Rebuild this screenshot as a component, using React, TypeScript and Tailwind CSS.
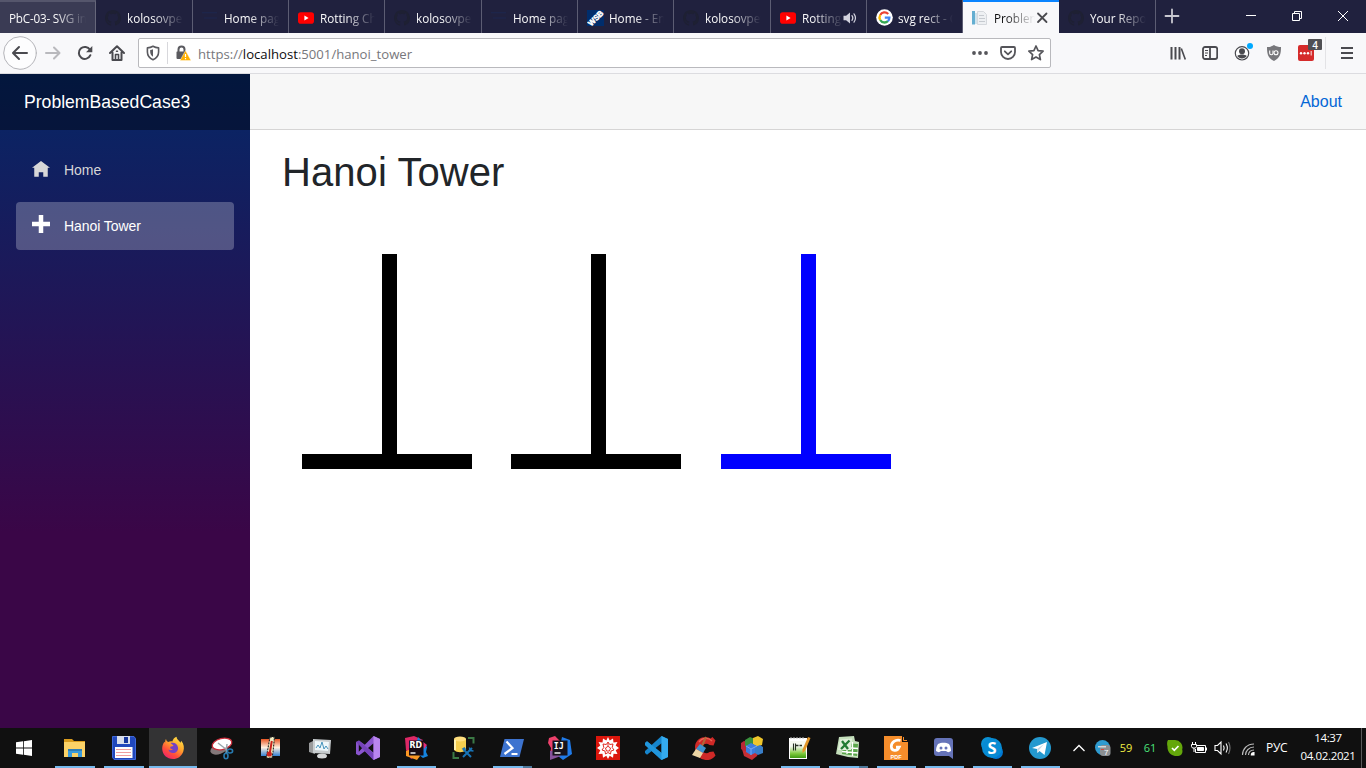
import type { ReactNode } from "react";

const UI = "font-['Open_Sans','Noto_Sans',sans-serif]";

function YouTube() {
  return (
    <svg width="16" height="16" viewBox="0 0 16 16">
      <rect x="0" y="2.3" width="16" height="11.4" rx="2.8" fill="#f00" />
      <path d="M6.4 5.6v4.8l4.2-2.4z" fill="#fff" />
    </svg>
  );
}

function GitHub() {
  return (
    <svg width="16" height="16" viewBox="0 0 16 16" fill="#1e2033">
      <path d="M8 0C3.58 0 0 3.58 0 8c0 3.54 2.29 6.53 5.47 7.59.4.07.55-.17.55-.38v-1.49c-2.23.48-2.69-.94-2.69-.94-.36-.93-.89-1.17-.89-1.17-.73-.5.05-.49.05-.49.81.06 1.23.83 1.23.83.72 1.23 1.88.87 2.34.66.07-.52.28-.87.51-1.07-1.78-.2-3.64-.89-3.64-3.95 0-.87.31-1.59.82-2.15-.08-.2-.36-1.02.08-2.12 0 0 .67-.21 2.2.82a7.6 7.6 0 0 1 4 0c1.53-1.04 2.2-.82 2.2-.82.44 1.1.16 1.92.08 2.12.51.56.82 1.27.82 2.15 0 3.07-1.87 3.75-3.65 3.95.29.25.54.73.54 1.48v2.2c0 .21.15.46.55.38A8 8 0 0 0 16 8c0-4.42-3.58-8-8-8z" />
    </svg>
  );
}

function DarkBars() {
  return (
    <svg width="18" height="16" viewBox="0 0 18 16">
      <path d="M0 2.5h16M2 8h14" stroke="#1d2751" strokeWidth="1" />
    </svg>
  );
}

function Wsb() {
  return (
    <svg width="17" height="16" viewBox="0 0 17 16">
      <rect y="0" width="17" height="16" fill="#002d6c" />
      <text x="8.500" y="11" textAnchor="middle" transform="rotate(-45 8.500 8)" fill="#fff" stroke="#fff" strokeWidth=".5" fontFamily="Liberation Sans" fontSize="8" fontWeight="700" textLength="18" lengthAdjust="spacingAndGlyphs">WSB</text>
    </svg>
  );
}

function Google() {
  return (
    <svg width="17" height="17" viewBox="0 0 17 17">
      <circle cx="8.5" cy="8.5" r="8.3" fill="#fff" />
      <g fill="none" strokeWidth="2.3">
        <path d="M12.2 5A5 5 0 0 0 4.2 6" stroke="#ea4335" />
        <path d="M4.2 6a5 5 0 0 0 0 5" stroke="#fbbc05" />
        <path d="M4.2 11a5 5 0 0 0 7.7 1.2" stroke="#34a853" />
        <path d="M11.9 12.2A5 5 0 0 0 13.4 8.6H8.8" stroke="#4285f4" />
      </g>
    </svg>
  );
}

function PageIcon() {
  return (
    <svg width="16" height="16" viewBox="0 0 16 16">
      <path d="M5.500 1.500h6l3 3v10h-9z" fill="#eef0f3" stroke="#d5d8dd" />
      <path d="M7 5.500h5M7 8.500h6M7 11.500h6" stroke="#c6cad0" />
      <rect x="0" y="1" width="3" height="13.500" fill="#64aed1" />
      <rect x="3" y="3" width="2" height="11" fill="#cfe3ed" />
    </svg>
  );
}

function Speaker() {
  return (
    <svg className="-mr-px" width="15" height="14" viewBox="0 0 15 14" fill="none" stroke="#d2d2de" strokeWidth="1.200" strokeLinecap="round">
      <path d="M.5 4.800h2.600L7 1.500v11L3.100 9.200H.5z" fill="#d2d2de" stroke="none" />
      <path d="M9 4.600c1 1.400 1 3.400 0 4.800M11 2.800c1.700 2.400 1.700 6 0 8.400" />
    </svg>
  );
}

type Tab = { title: string; icon?: ReactNode; w: string; kind?: "first" | "active"; sound?: boolean };

const tabs: Tab[] = [
  { title: "PbC-03- SVG in", w: "w-[96px]", kind: "first" },
  { title: "kolosovpetr", icon: <GitHub />, w: "w-[97px]" },
  { title: "Home page", icon: <DarkBars />, w: "w-[96px]" },
  { title: "Rotting Chr", icon: <YouTube />, w: "w-[96px]" },
  { title: "kolosovpetr", icon: <GitHub />, w: "w-[97px]" },
  { title: "Home page", icon: <DarkBars />, w: "w-[96px]" },
  { title: "Home - Eng", icon: <Wsb />, w: "w-[96px]" },
  { title: "kolosovpetr", icon: <GitHub />, w: "w-[97px]" },
  { title: "Rotting C", icon: <YouTube />, w: "w-[96px]", sound: true },
  { title: "svg rect - G", icon: <Google />, w: "w-[96px]" },
  { title: "Problem", icon: <PageIcon />, w: "w-[96px]", kind: "active" },
  { title: "Your Repos", icon: <GitHub />, w: "w-[97px]" },
];

function TabItem({ tab }: { tab: Tab }) {
  const look =
    tab.kind === "active"
      ? "bg-[#f8f8fa] border-t-2 border-t-[#0a84ff] text-[#0c0c0d] pb-0"
      : tab.kind === "first"
        ? "bg-[#3a3b54] border-t-2 border-t-[#55566c] border-r border-r-[#66677a] text-[#f9f9fa] tracking-[-0.2px]"
        : "border-r border-r-[#5c5d73] text-[#f9f9fa] pt-0.5";
  return (
    <div className={`flex h-[33px] shrink-0 items-center pl-[9px] pr-[9px] ${tab.w} ${look}`}>
      {tab.icon && <span className="mr-[5px] flex w-[17px] shrink-0 items-center">{tab.icon}</span>}
      <span className="min-w-0 flex-1 overflow-hidden whitespace-nowrap text-[11.7px] leading-4 [mask-image:linear-gradient(to_left,transparent,black_30px)]">
        {tab.title}
      </span>
      {tab.sound && <Speaker />}
      {tab.kind === "active" && (
        <svg className="-ml-px shrink-0" width="16" height="16" viewBox="0 0 16 16" stroke="#4a4a4f" strokeWidth="1.800" strokeLinecap="round">
          <path d="M4 3.500l8.500 8.500M12.500 3.500L4 12" />
        </svg>
      )}
    </div>
  );
}

function TabStrip() {
  return (
    <div className="flex h-[33px] shrink-0 bg-[#20213e]">
      {tabs.map((t, i) => (
        <TabItem key={i} tab={t} />
      ))}
      <svg className="ml-2 mt-2" width="16" height="16" viewBox="0 0 16 16" stroke="#c8c8d0" strokeWidth="1.800" strokeLinecap="round">
        <path d="M8 1.500v13M1.500 8h13" />
      </svg>
      <div className="ml-auto flex h-8 text-white">
        <svg width="46" height="32" viewBox="0 0 46 32" stroke="#fff" fill="none">
          <path d="M18 15.500h10" />
        </svg>
        <svg width="46" height="32" viewBox="0 0 46 32" stroke="#fff" fill="none">
          <path d="M18.500 13.500h7v7h-7zM20.500 13.500v-2h7v7h-2" />
        </svg>
        <svg width="46" height="32" viewBox="0 0 46 32" stroke="#fff" fill="none">
          <path d="M18 11l10 10M28 11l-10 10" />
        </svg>
      </div>
    </div>
  );
}

function Toolbar() {
  return (
    <div className="flex h-[41px] shrink-0 items-center border-b border-[#dcdce0] bg-[#f8f8fa]">
      <svg className="ml-[3px]" width="34" height="34" viewBox="0 0 34 34" fill="none" stroke="#4a4a4f" strokeWidth="2" strokeLinecap="round" strokeLinejoin="round">
        <circle cx="17" cy="17" r="16.300" stroke="#b4b4b9" strokeWidth="1" fill="#fdfdfe" />
        <path d="M24 17H10.500M16 11l-6 6 6 6" />
      </svg>
      <svg className="ml-2" width="16" height="16" viewBox="0 0 16 16" fill="none" stroke="#b9b9bd" strokeWidth="2" strokeLinecap="round" strokeLinejoin="round">
        <path d="M1 8h13M9 2.500L14.500 8 9 13.500" />
      </svg>
      <svg className="ml-4" width="16" height="16" viewBox="0 0 16 16" fill="none" stroke="#4a4a4f" strokeWidth="2">
        <path d="M13.400 10.200A6 6 0 1 1 13 4.800" strokeLinecap="round" />
        <path d="M15.300 1v6.300H9z" fill="#4a4a4f" stroke="none" />
      </svg>
      <svg className="ml-4" width="16" height="16" viewBox="0 0 16 16" fill="none" stroke="#4a4a4f" strokeWidth="2" strokeLinecap="round" strokeLinejoin="round">
        <path d="M1 8l7-6.800L15 8M3.500 7.500V15h9V7.500" />
        <path d="M6.500 15V9.500h3V15" strokeWidth="1.600" />
        <path d="M7.500 6.300h1" strokeWidth="1.500" />
      </svg>
      <div className="ml-[13px] flex h-[30px] w-[913px] items-center rounded-[2px] border border-[#b9b9bd] bg-white">
        <svg className="ml-[7px]" width="14" height="16" viewBox="0 0 14 16" fill="none" stroke="#5a5a5f" strokeWidth="1.600" strokeLinejoin="round">
          <path d="M7 1.200C5 2.400 3 2.800 1.400 2.900V7c0 3.700 2.400 6.300 5.600 7.700C10.200 13.300 12.600 10.700 12.600 7V2.900C11 2.800 9 2.400 7 1.200z" />
          <path d="M7 4.200v7.600C5 10.500 4.200 8.800 4.200 7V5c1-.1 2-.4 2.800-.8z" fill="#5a5a5f" stroke="none" />
        </svg>
        <span className="ml-[7px] h-[22px] w-px bg-[#d8d8dc]" />
        <svg className="ml-[7px]" width="16" height="16" viewBox="0 0 16 16">
          <path d="M3.500 7V4.500a3 3 0 0 1 6 0V7" fill="none" stroke="#5a5a5f" strokeWidth="2" />
          <path d="M2 6.500h8.500L6.500 14H2.500a1 1 0 0 1-1-1V7z" fill="#5a5a5f" />
          <path d="M10.500 5.500L16 15.500H5z" fill="#ffb000" stroke="#fff" strokeWidth=".4" />
          <path d="M10.500 9v3M10.500 13v1.200" stroke="#fff" strokeWidth="1.200" />
        </svg>
        <span className="ml-[7px] whitespace-nowrap pt-0.5 text-[13.150px] leading-5 text-[#77777c]">
          https://<span className="text-[#0c0c0d]">localhost</span>:5001/hanoi_tower
        </span>
        <div className="ml-auto flex items-center pr-1.5">
          <svg width="16" height="16" viewBox="0 0 16 16" fill="#55555a">
            <circle cx="2" cy="8" r="1.900" />
            <circle cx="8" cy="8" r="1.900" />
            <circle cx="14" cy="8" r="1.900" />
          </svg>
          <svg className="ml-3" width="16" height="16" viewBox="0 0 16 16" fill="none" stroke="#55555a" strokeWidth="1.800" strokeLinecap="round" strokeLinejoin="round">
            <path d="M2 2h12a1 1 0 0 1 1 1v4a7 7 0 0 1-14 0V3a1 1 0 0 1 1-1z" />
            <path d="M4.800 6.300L8 9.300l3.200-3" />
          </svg>
          <svg className="ml-3" width="16" height="16" viewBox="0 0 16 16" fill="none" stroke="#55555a" strokeWidth="1.700" strokeLinejoin="round">
            <path d="M8 1l2.100 4.600 5 .6-3.700 3.400 1 5L8 12.100l-4.400 2.500 1-5L.9 6.200l5-.6z" />
          </svg>
        </div>
      </div>
      <div className="ml-auto flex items-center">
        <svg width="16" height="16" viewBox="0 0 16 16" stroke="#4a4a4f" strokeWidth="2">
          <path d="M1.500 2v12.500M5.500 2v12.500M9.500 2v12.500" />
          <path d="M11.300 3.500l4 11" strokeWidth="1.600" />
        </svg>
        <svg className="ml-4" width="16" height="16" viewBox="0 0 16 16" fill="none" stroke="#4a4a4f" strokeWidth="1.800">
          <rect x="1" y="2" width="14.200" height="12" rx="2" />
          <path d="M8 2v12" />
          <path d="M3 5.500h3M3 8h3M3 10.500h2" strokeWidth="1" />
        </svg>
        <div className="relative ml-4 size-4">
          <svg width="16" height="16" viewBox="0 0 16 16">
            <circle cx="8" cy="8.300" r="6.700" fill="#fff" stroke="#4a4a4f" strokeWidth="1.200" />
            <circle cx="8" cy="6.300" r="3" fill="#4a4a4f" />
            <path d="M3.200 11c2-2 7.600-2 9.600 0-2 3.200-7.600 3.200-9.600 0z" fill="#4a4a4f" />
          </svg>
          <span className="absolute -right-[3px] -top-[2px] size-1.5 rounded-full bg-[#00a9ff]" />
        </div>
        <svg className="ml-4" width="16" height="16" viewBox="0 0 16 16">
          <path d="M8 0c2 1.500 4.500 2 7 2 0 7-1 11-7 14C2 13 1 9 1 2c2.500 0 5-.5 7-2z" fill="#77777b" />
          <path d="M3.700 5.500v2.700c0 2 3.300 2 3.300 0V5.500" fill="none" stroke="#fff" strokeWidth="1.100" />
          <circle cx="10" cy="7.700" r="2" fill="none" stroke="#fff" strokeWidth="1.100" />
        </svg>
        <div className="relative ml-4 size-4">
          <div className="flex size-4 items-center justify-center rounded-[2px] bg-[#d52b2b]">
            <svg width="16" height="16" viewBox="0 0 16 16" fill="#fff">
              <circle cx="3" cy="8.300" r="1.200" />
              <circle cx="6.500" cy="8.300" r="1.200" />
              <circle cx="10" cy="8.300" r="1.200" />
              <path d="M12.700 6h.9v4.600h-.9z" />
            </svg>
          </div>
          <span className="absolute -right-2 -top-1.5 flex h-[11px] w-[14px] items-center justify-center rounded-[1px] bg-[#505054] text-[10px] font-semibold leading-none text-white">4</span>
        </div>
        <span className="ml-[11px] h-8 w-px bg-[#e3e3e6]" />
        <svg className="ml-[14px] mr-3" width="14" height="14" viewBox="0 0 14 14" stroke="#4a4a4f" strokeWidth="1.800">
          <path d="M1 2h12M1 7h12M1 12h12" />
        </svg>
      </div>
    </div>
  );
}

function Sidebar() {
  return (
    <aside className="w-[250px] shrink-0 bg-[linear-gradient(180deg,rgb(5,39,103)_0%,#3a0647_70%)]">
      <div className="flex h-14 items-center bg-black/40 pl-6 text-[17.6px] text-white">ProblemBasedCase3</div>
      <nav className="flex flex-col gap-2 px-4 pt-4 text-[14px] tracking-[-0.06px]">
        <a className="flex h-12 items-center rounded pl-4 text-[#d7d7d7]">
          <svg className="mr-[14px]" width="18" height="18" viewBox="0 0 8 8" fill="currentColor">
            <path d="M4 0l-4 3h1v4h2v-2h2v2h2v-4.030l1 .03-4-3z" />
          </svg>
          Home
        </a>
        <a className="flex h-12 items-center rounded bg-white/25 pl-4 text-white">
          <svg className="-mt-1 mr-[14px]" width="18" height="18" viewBox="0 0 8 8" fill="currentColor">
            <path d="M3 0v3h-3v2h3v3h2v-3h3v-2h-3v-3h-2z" />
          </svg>
          Hanoi Tower
        </a>
      </nav>
    </aside>
  );
}

function Tower({ color }: { color: string }) {
  return (
    <svg width="170" height="215" viewBox="0 0 170 215" fill={color}>
      <rect x="80" width="15" height="201" />
      <rect y="200" width="170" height="15" />
    </svg>
  );
}

function Page() {
  return (
    <div className="flex min-h-0 flex-1 bg-white font-['Liberation_Sans',Arial,sans-serif]">
      <Sidebar />
      <main className="flex-1">
        <header className="flex h-14 items-center justify-end border-b border-[#d6d5d5] bg-[#f7f7f7] pr-6 text-base text-[#0366d6]">About</header>
        <div className="pl-8 pt-[18px]">
          <h1 className="text-[40px] leading-12 tracking-[0.08px] text-[#212529]">Hanoi Tower</h1>
          <div className="ml-5 mt-[58px] flex">
            <Tower color="#000" />
            <span className="w-[39px]" />
            <Tower color="#000" />
            <span className="w-10" />
            <Tower color="#00f" />
          </div>
        </div>
      </main>
    </div>
  );
}

function Art({ children }: { children: ReactNode }) {
  return (
    <svg width="24" height="24" viewBox="0 0 24 24">
      {children}
    </svg>
  );
}

const SANS = "Liberation Sans";

const apps: { art: ReactNode; state?: "open" | "active" | "multi" }[] = [
  {
    state: "open",
    art: (
      <Art>
        <path d="M1 3h8l2 2h11v4H1z" fill="#d99c1e" />
        <path d="M1 6h21v15H1z" fill="#fbd267" />
        <path d="M5 21v-8h14v8h-4v-4H9v4z" fill="#3a9bdc" />
        <path d="M5 13h14v2H5z" fill="#2f7eb5" />
      </Art>
    ),
  },
  {
    state: "open",
    art: (
      <Art>
        <path d="M.5.500h21.500l1.500 2v21H2l-1.500-2z" fill="#2148bd" stroke="#3f68d8" />
        <path d="M5 0h13v8H5z" fill="#d9dfed" />
        <path d="M12 1h4v6h-4z" fill="#16379e" />
        <path d="M3 11h17.500v11H3z" fill="#fff" />
        <path d="M4 13.500h15M4 16.500h15M4 19.500h15" stroke="#ef9e9e" />
      </Art>
    ),
  },
  {
    state: "active",
    art: (
      <Art>
        <defs>
          <linearGradient id="fx" x1=".85" y1="0" x2=".2" y2="1">
            <stop offset="0" stopColor="#ffe94a" />
            <stop offset=".4" stopColor="#ffa52c" />
            <stop offset=".7" stopColor="#ff4f3b" />
            <stop offset="1" stopColor="#ee1f70" />
          </linearGradient>
        </defs>
        <path d="M5 3c.3 1.700 1 2.500 2.300 3 1.200-.6 2.600-.8 4-.5C12 3.500 13.300 1.500 15.500.8c.2 2.500 2.200 3.500 4 6l.7-2C23 8 23.500 12 22.300 15.500 20.500 20.500 16.500 23 12 23 6 23 1.500 18.700 1.200 13 1.100 10 2 7.500 3.500 5.700l.6 1C4.200 5.300 4.300 4 5 3z" fill="url(#fx)" />
        <path d="M9.500 7c3.500-1 7 .5 7.500 4.500.4 3.500-2 5.500-5 5.500-2.500 0-4.300-1.500-4.500-3.500 1.200 1 3 1 4.500-.2-1.800 0-3-.8-2.800-2 .2-.8 1.500-1 3.300-1.300C12 8.500 10.500 8.200 9.500 7z" fill="#7542c5" />
      </Art>
    ),
  },
  {
    art: (
      <Art>
        <ellipse cx="9" cy="13" rx="9" ry="5" transform="rotate(-20 9 13)" fill="#84787a" />
        <ellipse cx="12" cy="8" rx="10" ry="5.500" transform="rotate(-14 12 8)" fill="#fff" stroke="#c92e3c" strokeWidth="1.300" />
        <path d="M8 7l9 7M17 8l-1 10" stroke="#9aa7ad" strokeWidth="1.500" />
        <g fill="none" stroke="#277bb2" strokeWidth="1.600">
          <ellipse cx="20" cy="15" rx="2.600" ry="2" />
          <ellipse cx="16" cy="20" rx="2" ry="2.700" />
        </g>
      </Art>
    ),
  },
  {
    art: (
      <Art>
        <defs>
          <linearGradient id="th" x2="0" y2="1">
            <stop stopColor="#e95622" />
            <stop offset=".5" stopColor="#fff0df" />
            <stop offset="1" stopColor="#3381d2" />
          </linearGradient>
        </defs>
        <path d="M2 3h19v17H2z" fill="url(#th)" />
        <path d="M11 1h4.500l-1.500 15-1 6H7.500l1-7z" fill="#f3eec4" stroke="#222" strokeWidth="1.100" strokeDasharray="2 1" />
        <path d="M12.800 5l-2 12" stroke="#c9221d" strokeWidth="2" />
        <circle cx="10.300" cy="18" r="2.600" fill="#c9221d" />
      </Art>
    ),
  },
  {
    art: (
      <Art>
        <path d="M1 7l6-3v14l-6-2z" fill="#999b9c" />
        <path d="M5 3l18 1-1 14-17-1z" fill="#c8cdcf" />
        <path d="M7 5l14 1-1 9-13-1z" fill="#eef7fa" />
        <path d="M8 12l2-3 2 3 2-6 2 7 2-3 2 3" fill="none" stroke="#4794bc" />
        <ellipse cx="14" cy="20" rx="5" ry="2.500" fill="#d6d8d9" />
      </Art>
    ),
  },
  {
    art: (
      <Art>
        <path fillRule="evenodd" d="M17.500 0L24 3v18l-6.500 3L8.800 15.300 3 19.500l-3-1.400V6l3-1.500 5.800 4.200zM17.500 7.300L12 12l5.500 4.700zM2.800 8.300v7.400L6.200 12z" fill="#8a55ce" />
        <path d="M0 6l3-1.500L19 19l-1.500 5z" fill="#6f3db3" opacity=".75" />
        <path d="M17.500 0L24 3v18l-6.500 3z" fill="#b985ef" />
      </Art>
    ),
  },
  {
    state: "open",
    art: (
      <Art>
        <path d="M1 2l9-2 9 4-3 15-9 4-5-9z" fill="#dd2866" />
        <path d="M14 1l5 5 4 5-1 5 2 4-5 2-9-7z" fill="#1584df" />
        <path d="M18 5l5 4-3 4z" fill="#e32d78" />
        <path d="M2 15l8-3 6 8-3 4-11-4z" fill="#fa9823" />
        <rect x="5" y="4.500" width="14.500" height="15" fill="#170a13" />
        <text x="5.500" y="12.300" fontFamily="DejaVu Sans" fontWeight="700" fontSize="8.300" textLength="12.500" lengthAdjust="spacingAndGlyphs" fill="#fff">RD</text>
        <path d="M6.500 17h5" stroke="#fff" strokeWidth="1.400" />
      </Art>
    ),
  },
  {
    art: (
      <Art>
        <path d="M2 3v11c3 3 9 3 12 0V3z" fill="#f4ce4f" />
        <ellipse cx="8" cy="3" rx="6" ry="2.500" fill="#ffdf7e" />
        <path d="M3 4v10" stroke="#fff1b0" strokeWidth="2" />
        <path d="M16 2h5.500v5.500M1.500 16v6H7" fill="none" stroke="#3b7945" strokeWidth="2" />
        <path d="M11 13l8 8M20 12l-9 9" stroke="#1874b7" strokeWidth="2" />
        <path d="M9.500 13l3-2 2 3z" fill="#1874b7" />
        <path d="M17.500 11.500l.5 3 3.500.5" fill="none" stroke="#1874b7" strokeWidth="1.500" />
      </Art>
    ),
  },
  {
    state: "multi",
    art: (
      <Art>
        <path d="M4.500 3H24l-4.500 18H0z" fill="#3d73cf" />
        <path d="M6.500 5.500l6 6.500-8 6" fill="none" stroke="#fff" strokeWidth="2.200" />
        <path d="M11.500 18h6" stroke="#fff" strokeWidth="2" />
      </Art>
    ),
  },
  {
    art: (
      <Art>
        <path d="M1 2l6-2 6 6-4 12-7 1 1-7-3-5z" fill="#ed416b" />
        <path d="M14 1l8 3 2 14-9 6-5-4z" fill="#207be9" />
        <path d="M2 15l6-1 5 6-11 4z" fill="#87539c" />
        <rect x="4.500" y="4.500" width="15" height="15" fill="#15121b" />
        <text x="5.800" y="12.500" fontFamily="DejaVu Sans Mono" fontWeight="700" fontSize="8.500" textLength="10" lengthAdjust="spacingAndGlyphs" fill="#fff">IJ</text>
        <path d="M6.500 17h6" stroke="#fff" strokeWidth="1.400" />
      </Art>
    ),
  },
  {
    art: (
      <Art>
        <path d="M0 0h24v24H0z" fill="#dc160c" />
        <path d="M12 1l1.700 3.500L17 2.500l.5 4 4-.5-1.800 3.500L23 12l-3.300 2.300L21.500 18l-4-.2-.5 4-3.300-2L12 23l-1.700-3.200-3.300 2-.5-4-4 .2 1.800-3.700L1 12l3.300-2.500L2.500 6l4 .5.5-4 3.300 2z" fill="#fff" />
        <path d="M12 6l1.700 2.500 3.300-.5-.8 3.500L18 14l-3 1-.5 3-2.500-1.500L9.500 18 9 15l-3-1 1.800-2.500L7 8l3.300.5z" fill="none" stroke="#dc160c" strokeWidth=".9" />
        <path d="M9.500 12l2.500-1.700 2.500 1.700-1 3h-3zM12 10V7" fill="none" stroke="#dc160c" strokeWidth=".9" />
      </Art>
    ),
  },
  {
    art: (
      <Art>
        <path d="M17.500 0L24 3v18l-6.500 3L1 9V7l2-1.800 14.500 12V7.300L3 18.800 1 17v-2z" fill="#1685cc" />
        <path d="M1 7l2-1.800L19 18l-1.500 6L1 9z" fill="#2196dc" />
        <path d="M17.500 0L24 3v18l-6.500 3z" fill="#34abef" />
      </Art>
    ),
  },
  {
    art: (
      <Art>
        <path d="M23.500 4.500l-2 5-4-.5a4.800 4.800 0 1 0 0 7l4-.5 2 4A11 11 0 0 1 4 16C1 9 5 2 12 1.300c3-.3 5 .2 6.500 1.200l2-1.500z" fill="#cf2927" />
        <path d="M20 5A8.500 8.500 0 0 0 7 6" fill="none" stroke="#ed6355" strokeWidth="1.300" />
        <path d="M14 1l-4 9" stroke="#b0683a" strokeWidth="2" />
        <path d="M8 8l6 4-3 5-7-4z" fill="#3f93d0" />
        <path d="M4 13l7 4-3 5-8-3z" fill="#ecd5a4" />
      </Art>
    ),
  },
  {
    art: (
      <Art>
        <path d="M2 13l10 3 7-1-2 5-5 4-8-4z" fill="#c52e35" />
        <path d="M1 7l3-2 4 1v8l-4 1-3-2z" fill="#b92735" />
        <path d="M5 4l5-3 5 2v6l-5 3-5-2z" fill="#39923d" />
        <path d="M13 2l5-2 5 3-1 6-5 2-4-3z" fill="#efc62b" />
        <path d="M6 10l5-3 6 3v6l-6 3-5-3z" fill="#3c7de0" />
        <path d="M15 11l5-2 3 2v6l-5 2-3-2z" fill="#397ec8" />
        <path d="M6 10l5 3 6-3M11 13v6" fill="none" stroke="#79aaf1" />
      </Art>
    ),
  },
  {
    state: "open",
    art: (
      <Art>
        <defs>
          <linearGradient id="np" x2="0" y2="1">
            <stop offset=".3" stopColor="#f6f9f0" />
            <stop offset=".75" stopColor="#7bc83a" />
            <stop offset="1" stopColor="#3f9a12" />
          </linearGradient>
        </defs>
        <path d="M1 2h18v21H1z" fill="#fff" />
        <path d="M2 5h16v17H2z" fill="url(#np)" />
        <path d="M3 1v2M6 1v2M9 1v2M12 1v2M15 1v2" stroke="#bbb" />
        <path d="M5.500 7.500v7M7.500 7.500v7" stroke="#263022" strokeWidth="1.100" />
        <path d="M8 9.500h2.500M11.500 9.500H14" stroke="#263022" strokeWidth="1.400" />
        <path d="M20 1l2.500 1-5.500 13-2.500 2v-3.500z" fill="#e39627" />
      </Art>
    ),
  },
  {
    state: "multi",
    art: (
      <Art>
        <path d="M3 1l15-1 1 5 4 1-1 16-10-1L0 18z" fill="#c4dfbb" />
        <path d="M7 7l15 1-1 12-15-2z" fill="#5aa64b" />
        <path d="M7 11.500l15 1M6 15.500l16 1.500M11 6v12M16.500 6v14" stroke="#fff" strokeWidth="1.300" />
        <path d="M4 3.500l12-1L15 14H2z" fill="#dff0da" />
        <path d="M6 5l6 8M13.500 4.500L5 13" stroke="#217b34" strokeWidth="2.300" />
      </Art>
    ),
  },
  {
    state: "open",
    art: (
      <Art>
        <path d="M0 0h18l6 6v18H0z" fill="#f58d2b" />
        <path d="M18 0h6v6h-6z" fill="#111" />
        <path d="M19.500 1v3.500H23" fill="none" stroke="#f58d2b" />
        <path d="M16.500 4.500C11.500 3 7.300 6.500 7.300 10.500c0 4.500 6 5.500 8 .5H12" fill="none" stroke="#fff" strokeWidth="2.700" />
        <text x="12" y="22.500" textAnchor="middle" fontFamily={SANS} fontWeight="700" fontSize="5.500" fill="#fff">PDF</text>
      </Art>
    ),
  },
  {
    state: "open",
    art: (
      <Art>
        <path d="M5 2h13a3 3 0 0 1 3 3v18l-4-3H5a3 3 0 0 1-3-3V5a3 3 0 0 1 3-3z" fill="#6573b8" />
        <path d="M6 8c3-1.800 8-1.800 11 0 1.500 2.500 2 4.500 2 7-2 1.500-3.500 1.500-5 0H9c-1.500 1.500-3 1.500-5 0 0-2.500.5-4.500 2-7z" fill="#fff" />
        <circle cx="9" cy="12" r="1.500" fill="#6573b8" />
        <circle cx="14" cy="12" r="1.500" fill="#6573b8" />
      </Art>
    ),
  },
  {
    state: "open",
    art: (
      <Art>
        <circle cx="8" cy="8" r="7" fill="#0b91d4" />
        <circle cx="16" cy="16" r="7" fill="#0078d4" />
        <circle cx="12" cy="12" r="10" fill="#078bd3" />
        <text x="12" y="18" textAnchor="middle" fontFamily="Open Sans" fontWeight="700" fontSize="16.500" fill="#fff">S</text>
      </Art>
    ),
  },
  {
    state: "open",
    art: (
      <Art>
        <circle cx="12" cy="12" r="11" fill="#2499cf" />
        <path d="M4 12l15-6-2.500 13-5-4-2 2-.5-4z" fill="#fff" />
        <path d="M9 13l7-5-5 6-1.500 3z" fill="#c7dce9" />
      </Art>
    ),
  },
];

function Taskbar() {
  return (
    <footer className="flex h-10 shrink-0 bg-[#101010] text-white">
      <div className="flex w-[50px] items-center pl-4">
        <svg width="16" height="16" viewBox="0 0 16 16" fill="#fff">
          <path d="M0 2.300l7-1v6.300H0zM7.800 1.200L16 0v7.600H7.800zM0 8.400h7v6.300l-7-1zM7.800 8.400H16V16l-8.200-1.200z" />
        </svg>
      </div>
      {apps.map((a, i) => (
        <div key={i} className={`flex w-12 shrink-0 flex-col items-center ${i < 6 ? "ml-px" : i === 6 ? "ml-px pr-px" : "pr-px"} ${a.state === "active" ? "bg-[#333334]" : ""}`}>
          <div className={`flex h-[38px] items-center pt-[2px] ${i < 6 ? "" : "pr-px"}`}>{a.art}</div>
          {a.state === "active" && <div className="h-0.5 w-full bg-[#76b9ed]" />}
          {a.state === "open" && <div className={`h-0.5 bg-[#76b9ed] ${i < 6 ? "w-10" : "w-[39px]"}`} />}
          {a.state === "multi" && (
            <div className="flex h-0.5 w-[39px]">
              <span className="w-[30px] bg-[#76b9ed]" />
              <span className="flex-1 bg-[#4d789a]" />
            </div>
          )}
        </div>
      ))}
      <div className="flex items-center pl-[7px]">
        <svg width="14" height="10" viewBox="0 0 14 10" fill="none" stroke="#fff" strokeWidth="1.300">
          <path d="M1.500 8L7 2.500 12.500 8" />
        </svg>
        <svg className="ml-[9px]" width="16" height="16" viewBox="0 0 16 16">
          <circle cx="7.500" cy="7.500" r="7.500" fill="#2f9bd0" />
          <rect x="5" y="5" width="10.500" height="11" rx="3" fill="#8b8f92" />
          <path d="M3 6h8v1.500H3z" fill="#d0d8dc" />
          <path d="M6 9.500h3" stroke="#d7483a" />
          <text x="9" y="14.500" fontFamily={SANS} fontSize="8" fill="#fff">7</text>
        </svg>
        <span className="ml-[7px] w-4 text-center text-[11px] text-[#f1ee43]">59</span>
        <span className="ml-2 w-4 text-center text-[11px] text-[#4be27b]">61</span>
        <svg className="ml-[9px]" width="16" height="16" viewBox="0 0 16 16">
          <path d="M1 0h7a7.500 7.500 0 0 1 7.200 9.500c1 3-.5 6.500-4 6.500C6 17 0 13 .5 6.500-.2 4 0 1.500 1 0z" fill="#64a70b" />
          <path d="M5 8l2.300 2.300L11.500 6" fill="none" stroke="#fff" strokeWidth="1.700" />
        </svg>
        <svg className="ml-2" width="17" height="16" viewBox="0 0 17 16" fill="none" stroke="#fff">
          <path d="M5 5.500h9.500v7H4.500V9" />
          <path d="M6.500 7.500h6v3h-6z" fill="#fff" />
          <path d="M15.500 7.500v3M1.500 2v2M4.500 2v2M.5 4.500h5v2l-1 1.500h-3l-1-1.500zM3 8v4" />
        </svg>
        <svg className="ml-[6px]" width="18" height="16" viewBox="0 0 18 16" fill="none" stroke="#fff" strokeWidth="1.100">
          <path d="M1 5.500h2.500l3.500-3.500v12l-3.500-3.500H1z" />
          <path d="M9.500 5.500c1 2 1 3 0 5M12 3.500c1.800 3 1.800 6 0 9" />
          <path d="M14.500 2c2 4 2 8 0 12" stroke="#777" />
        </svg>
        <svg className="ml-[9px] mt-0.5" width="16" height="16" viewBox="0 0 16 16" fill="none" stroke="#bbb" strokeWidth="1.100">
          <path d="M1.500 14C1.500 8 6 3 13 3M4.500 14c0-4 3.500-8 8.500-8M7.500 14c0-3 2-5 5.500-5" />
          <path d="M10.300 14c0-1.500 1-2.500 2.700-2.500V14z" fill="#fff" stroke="#fff" />
        </svg>
        <span className="ml-[9px] w-[24px] whitespace-nowrap text-[12px] tracking-[-0.300px]">РУС</span>
      </div>
      <div className="ml-auto flex w-[66px] flex-col items-center justify-center pb-0.5 text-[11.500px] leading-[18px] tracking-[-0.350px]">
        <span>14:37</span>
        <span>04.02.2021</span>
      </div>
      <span className="mr-1 h-full w-px bg-[#59595a]" />
    </footer>
  );
}

export default function App() {
  return (
    <div className={`flex h-screen w-full flex-col overflow-hidden ${UI}`}>
      <TabStrip />
      <Toolbar />
      <Page />
      <Taskbar />
    </div>
  );
}
